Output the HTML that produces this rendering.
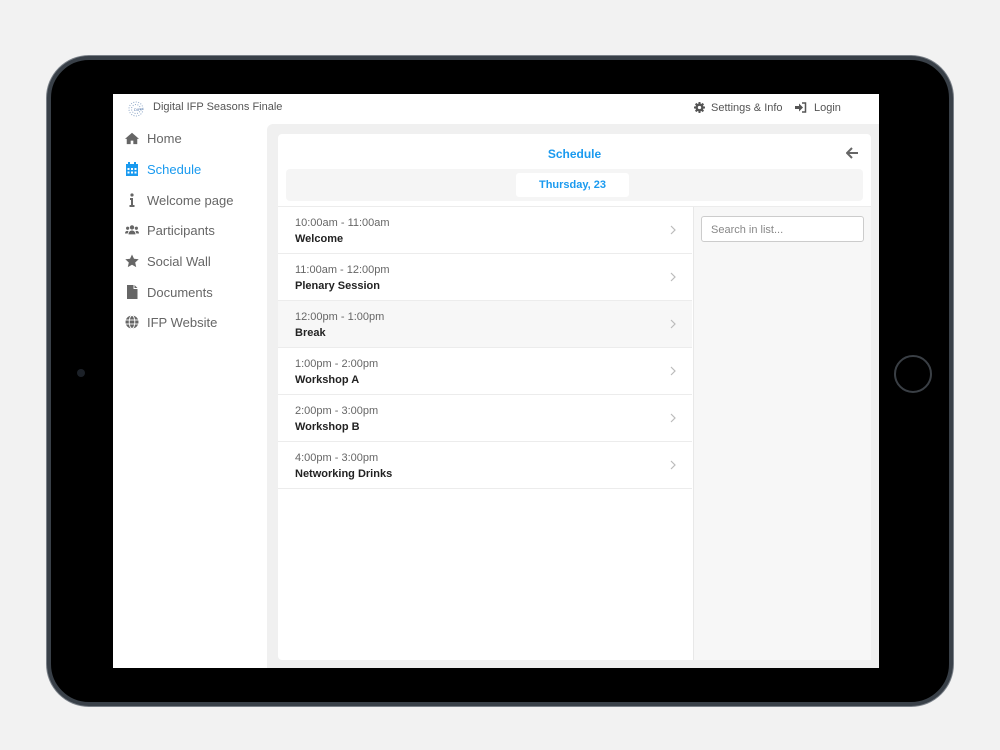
<!DOCTYPE html>
<html><head><style>
*{box-sizing:border-box;margin:0;padding:0}
body{width:1000px;height:750px;background:#f2f2f2;font-family:"Liberation Sans",Arial,sans-serif;position:relative;overflow:hidden}
.ipad{position:absolute;left:47px;top:56px;width:906px;height:650px;background:#000;border-radius:42px;border:4px solid #394048;box-shadow:0 0 0 1px #7a8088}
.cam{position:absolute;left:77px;top:369px;width:8px;height:8px;border-radius:50%;background:#1c2128}
.home{position:absolute;left:894px;top:355px;width:38px;height:38px;border-radius:50%;border:2px solid #3a3f45}
.screen{position:absolute;left:113px;top:94px;width:766px;height:574px;background:#fff;overflow:hidden}
.top{position:absolute;left:0;top:0;width:766px;height:30px;background:#fff;font-size:11px;color:#555}
.side{position:absolute;left:0;top:30px;width:154px;height:544px;background:#fff}
.nav{position:absolute;left:12px;height:20px;font-size:13px;color:#666;display:flex;align-items:center}
.nav svg{width:14px;height:14px;margin-right:8px;fill:#666}
.nav.act{color:#1a9aef}.nav.act svg{fill:#1a9aef}
.main{position:absolute;left:154px;top:30px;width:612px;height:544px;background:#f0f0f0;border-top-left-radius:6px}
.card{position:absolute;left:165px;top:40px;width:593px;height:526px;background:#fff;border-radius:4px}
.row{position:absolute;left:0;width:414px;height:47px;border-bottom:1px solid #ececec}
.row .t{position:absolute;left:17px;top:10px;font-size:11px;color:#666}
.row .n{position:absolute;left:17px;top:26px;font-size:11px;font-weight:bold;color:#222}
.row svg{position:absolute;left:392px;top:18px}
</style></head><body>
<div class="ipad"></div>
<div class="cam"></div><div class="home"></div>
<div class="screen">
 <div class="top">
  <svg style="position:absolute;left:12px;top:5px" width="20" height="18" viewBox="0 0 20 18"><g fill="none" stroke="#8fa8c8" stroke-width="1" stroke-dasharray="1 1.5"><circle cx="11" cy="10" r="7"/><circle cx="11" cy="10" r="4.5"/></g><text x="9" y="12" font-size="4" fill="#5577aa">DIFP</text></svg>
  <span style="position:absolute;left:40px;top:7px">Digital IFP Seasons Finale</span>
  <svg style="position:absolute;left:581px;top:8px" width="11" height="11" viewBox="0 0 12 12"><circle cx="6" cy="6" r="4.5" fill="#555"/><g stroke="#555" stroke-width="2.2"><line x1="6" y1="0" x2="6" y2="12"/><line x1="0" y1="6" x2="12" y2="6"/><line x1="1.8" y1="1.8" x2="10.2" y2="10.2"/><line x1="10.2" y1="1.8" x2="1.8" y2="10.2"/></g><circle cx="6" cy="6" r="1.8" fill="#fff"/></svg>
  <span style="position:absolute;left:598px;top:8px">Settings &amp; Info</span>
  <svg style="position:absolute;left:682px;top:8px" width="12" height="11" viewBox="0 0 12 11"><path d="M0 4h4V1.5L8 5.5 4 9.5V7H0z" fill="#555"/><path d="M7 1h3.5v9H7" fill="none" stroke="#555" stroke-width="1.5"/></svg>
  <span style="position:absolute;left:701px;top:8px">Login</span>
 </div>
 <div class="side">
  <div class="nav" style="top:4px"><svg viewBox="0 0 16 14"><path d="M8 1L0 8h2v6h4.5v-4h3v4H14V8h2z"/></svg>Home</div>
  <div class="nav act" style="top:35px"><svg viewBox="0 0 14 14"><path d="M1 2h12v12H1z M3 0h2v3H3z M9 0h2v3H9z"/><g fill="#fff"><rect x="2.5" y="6" width="2" height="2"/><rect x="6" y="6" width="2" height="2"/><rect x="9.5" y="6" width="2" height="2"/><rect x="2.5" y="9.5" width="2" height="2"/><rect x="6" y="9.5" width="2" height="2"/><rect x="9.5" y="9.5" width="2" height="2"/></g></svg>Schedule</div>
  <div class="nav" style="top:66px"><svg viewBox="0 0 14 14"><circle cx="7" cy="2" r="1.6"/><path d="M5 5h3v7h1.5v2h-5v-2H6V7H5z"/></svg>Welcome page</div>
  <div class="nav" style="top:96px"><svg viewBox="0 0 16 14"><circle cx="8" cy="4" r="2.5"/><circle cx="3" cy="5" r="1.8"/><circle cx="13" cy="5" r="1.8"/><path d="M4 12c0-3 2-4.5 4-4.5s4 1.5 4 4.5z M0 11c0-2 1-3 3-3l1 .5-1 2.5z M16 11c0-2-1-3-3-3l-1 .5 1 2.5z"/></svg>Participants</div>
  <div class="nav" style="top:127px"><svg viewBox="0 0 14 14"><path d="M7 .5l2 4.3 4.7.5-3.5 3.2 1 4.6L7 10.8 2.8 13.1l1-4.6L.3 5.3 5 4.8z"/></svg>Social Wall</div>
  <div class="nav" style="top:158px"><svg viewBox="0 0 14 14"><path d="M2 0h6.5v4h4v10H2z M9.5 0l3 3h-3z"/></svg>Documents</div>
  <div class="nav" style="top:188px"><svg viewBox="0 0 14 14"><circle cx="7" cy="7" r="6.5"/><g fill="none" stroke="#fff" stroke-width=".9"><ellipse cx="7" cy="7" rx="2.8" ry="6.5"/><line x1="0" y1="5" x2="14" y2="5"/><line x1="0" y1="9" x2="14" y2="9"/></g></svg>IFP Website</div>
 </div>
 <div class="main"></div>
 <div class="card">
  <div style="position:absolute;left:0;width:593px;top:13px;text-align:center;font-size:12px;font-weight:bold;color:#1a9aef">Schedule</div>
  <svg style="position:absolute;left:568px;top:13px" width="13" height="12" viewBox="0 0 13 12"><path d="M6 1L1 6l5 5M1 6h11" fill="none" stroke="#666" stroke-width="2"/></svg>
  <div style="position:absolute;left:8px;top:35px;width:577px;height:32px;background:#f5f5f5;border-radius:4px"></div>
  <div style="position:absolute;left:238px;top:39px;width:113px;height:24px;background:#fff;border-radius:3px;text-align:center;line-height:24px;font-size:11px;font-weight:bold;color:#1a9aef">Thursday, 23</div>
  <div style="position:absolute;left:0;top:72px;width:593px;height:1px;background:#ececec"></div>
  <div style="position:absolute;left:415px;top:73px;width:178px;height:453px;background:#f7f7f7;border-left:1px solid #e8e8e8"></div>
  <div style="position:absolute;left:423px;top:82px;width:163px;height:26px;background:#fff;border:1px solid #ccc;border-radius:3px;font-size:11px;color:#888;padding:7px 9px">Search in list...</div>
  <div class="row" style="top:73px"><div class="t">10:00am - 11:00am</div><div class="n">Welcome</div><svg width="6" height="10" viewBox="0 0 6 10"><path d="M1 1l4 4-4 4" fill="none" stroke="#bbb" stroke-width="1.2"/></svg></div>
  <div class="row" style="top:120px"><div class="t">11:00am - 12:00pm</div><div class="n">Plenary Session</div><svg width="6" height="10" viewBox="0 0 6 10"><path d="M1 1l4 4-4 4" fill="none" stroke="#bbb" stroke-width="1.2"/></svg></div>
  <div class="row" style="top:167px;background:#f7f7f7"><div class="t">12:00pm - 1:00pm</div><div class="n">Break</div><svg width="6" height="10" viewBox="0 0 6 10"><path d="M1 1l4 4-4 4" fill="none" stroke="#bbb" stroke-width="1.2"/></svg></div>
  <div class="row" style="top:214px"><div class="t">1:00pm - 2:00pm</div><div class="n">Workshop A</div><svg width="6" height="10" viewBox="0 0 6 10"><path d="M1 1l4 4-4 4" fill="none" stroke="#bbb" stroke-width="1.2"/></svg></div>
  <div class="row" style="top:261px"><div class="t">2:00pm - 3:00pm</div><div class="n">Workshop B</div><svg width="6" height="10" viewBox="0 0 6 10"><path d="M1 1l4 4-4 4" fill="none" stroke="#bbb" stroke-width="1.2"/></svg></div>
  <div class="row" style="top:308px"><div class="t">4:00pm - 3:00pm</div><div class="n">Networking Drinks</div><svg width="6" height="10" viewBox="0 0 6 10"><path d="M1 1l4 4-4 4" fill="none" stroke="#bbb" stroke-width="1.2"/></svg></div>
 </div>
</div>
</body></html>
